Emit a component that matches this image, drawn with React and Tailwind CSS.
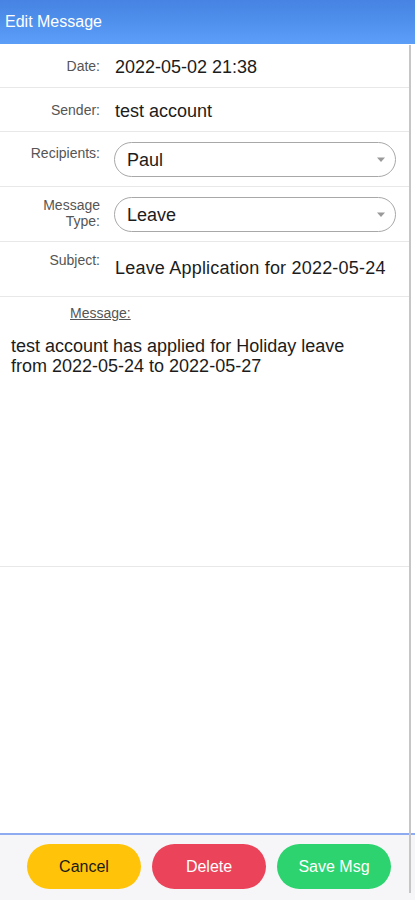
import React from 'react';

const rows = [
    { label: 'Date:', value: '2022-05-02 21:38' },
    { label: 'Sender:', value: 'test account' },
];

function Caret() {
    return (
        <svg width="10" height="6" viewBox="0 0 10 6" className="shrink-0">
            <path d="M1 0.5 L9 0.5 L5 5 Z" fill="#9a9a9a" />
        </svg>
    );
}

function SelectBox({ value }) {
    return (
        <div className="flex h-[35px] w-[282px] items-center justify-between rounded-full border border-[#a8a8a8] pl-[12px] pr-[9px]">
            <span className="text-[18px] leading-[22px] text-[#1c1c1c]">{value}</span>
            <Caret />
        </div>
    );
}

function App() {
    return (
        <div className="relative flex h-[900px] w-[415px] flex-col overflow-hidden bg-white font-['Liberation_Sans',Arial,sans-serif]">
            <header className="flex h-[44px] shrink-0 items-center bg-gradient-to-b from-[#4683e2] to-[#5b9ef8] pl-[5px]">
                <h1 className="text-[16px] text-white">Edit Message</h1>
            </header>

            <main className="flex flex-1 flex-col pr-[6px]">
                {rows.map(row => (
                    <div key={row.label} className="flex h-[44px] items-start border-b border-[#e8e8e8] pt-[12px]">
                        <div className="w-[100px] pt-[1px] text-right text-[14px] leading-[18px] text-[#555]">{row.label}</div>
                        <div className="pl-[15px] text-[18px] leading-[22px] text-[#1c1c1c]">{row.value}</div>
                    </div>
                ))}

                <div className="flex h-[55px] items-start border-b border-[#e8e8e8] pt-[10px]">
                    <div className="w-[100px] pt-[2px] text-right text-[14px] leading-[18px] text-[#555]">Recipients:</div>
                    <div className="pl-[14px]">
                        <SelectBox value="Paul" />
                    </div>
                </div>

                <div className="flex h-[55px] items-start border-b border-[#e8e8e8] pt-[10px]">
                    <div className="w-[100px] text-right text-[14px] leading-[16px] text-[#555]">Message<br />Type:</div>
                    <div className="pl-[14px]">
                        <SelectBox value="Leave" />
                    </div>
                </div>

                <div className="flex h-[55px] items-start border-b border-[#e8e8e8] pt-[9px]">
                    <div className="w-[100px] text-right text-[14px] leading-[18px] text-[#555]">Subject:</div>
                    <div className="pl-[15px] pt-[6px] text-[18px] leading-[22px] tracking-[0.2px] text-[#1c1c1c]">Leave Application for 2022-05-24</div>
                </div>

                <div className="flex h-[270px] flex-col border-b border-[#e8e8e8] pt-[7px]">
                    <div className="pl-[70px] text-[14px] leading-[18px] text-[#555] underline">Message:</div>
                    <p className="mt-[14px] pl-[11px] text-[18px] leading-[20px] text-[#1c1c1c]">
                        test account has applied for Holiday leave<br />from 2022-05-24 to 2022-05-27
                    </p>
                </div>

                <div className="flex-1" />
            </main>

            <footer className="flex h-[67px] shrink-0 items-start gap-[11px] border-t-2 border-[#8eaaf0] bg-[#f6f6f8] pl-[27px] pt-[9px]">
                <button className="h-[45px] w-[114px] rounded-full bg-[#ffc409] text-[16px] text-[#1a1a1a]">Cancel</button>
                <button className="h-[45px] w-[114px] rounded-full bg-[#eb445a] text-[16px] text-white">Delete</button>
                <button className="h-[45px] w-[114px] rounded-full bg-[#2dd36f] text-[16px] text-white">Save Msg</button>
            </footer>

            <div className="absolute bottom-[7px] right-[4px] top-[45px] w-[2px] bg-[#c6c6c6]" />
        </div>
    );
}

export default App;
